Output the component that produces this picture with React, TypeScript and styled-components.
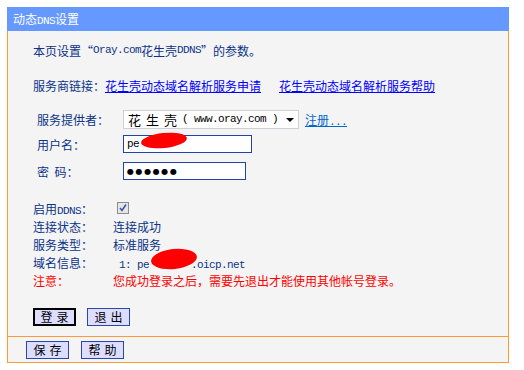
import styled, { createGlobalStyle } from "styled-components";

const GlobalStyle = createGlobalStyle`
  body {
    margin: 0;
    background: #ffffff;
    font-family: "Noto Sans CJK SC", "Liberation Sans", sans-serif;
    font-size: 12px;
  }
`;

const Page = styled.div`
  width: 502px;
  margin: 7px 0 0 7px;
`;

const Header = styled.div`
  height: 24px;
  line-height: 24px;
  padding-left: 6px;
  background: #6699ff;
  color: #ffffff;
  font-size: 12px;
`;

const Panel = styled.div`
  background: #f4f4f4;
  border: 1px solid #ff9933;
  border-top: none;
  padding: 10px 0 10px 25px;
`;

const Footer = styled.div`
  display: flex;
  gap: 12px;
  align-items: center;
  height: 25px;
  padding-left: 18px;
  background: #f4f4f4;
  border: 1px solid #ff9933;
  border-top: none;
`;

const Mono = styled.span`
  font-family: "Liberation Mono", monospace;
  font-size: 11px;
  letter-spacing: -0.6px;
`;

const Line = styled.div<{ $h: number; $mt?: number; $color?: string }>`
  display: flex;
  align-items: center;
  height: ${(p) => p.$h}px;
  margin-top: ${(p) => p.$mt ?? 0}px;
  color: ${(p) => p.$color ?? "#0b3388"};
  white-space: nowrap;
`;

const Link = styled.a<{ $light?: boolean }>`
  color: ${(p) => (p.$light ? "#0066cc" : "#0000ff")};
  text-decoration: underline;
  cursor: pointer;
`;

const Label = styled.span<{ $w: number; $color?: string }>`
  display: inline-block;
  width: ${(p) => p.$w}px;
  flex: none;
  color: ${(p) => p.$color ?? "#0b3388"};
`;

const FormBlock = styled.div`
  padding-left: 4px;
`;

const FakeSelect = styled.div`
  position: relative;
  display: flex;
  align-items: center;
  box-sizing: border-box;
  width: 176px;
  height: 19px;
  padding-left: 4px;
  background: #ffffff;
  border: 1px solid #cfcfd6;
  color: #000000;
  font-size: 13px;
`;

const Arrow = styled.span`
  position: absolute;
  right: 4px;
  top: 7px;
  width: 0;
  height: 0;
  border-left: 4px solid transparent;
  border-right: 4px solid transparent;
  border-top: 4px solid #000000;
`;

const Spaced = styled.span`
  letter-spacing: 5px;
`;

const TextBox = styled.div<{ $w: number }>`
  position: relative;
  display: flex;
  align-items: center;
  box-sizing: border-box;
  width: ${(p) => p.$w}px;
  height: 18px;
  padding-left: 3px;
  background: #ffffff;
  border: 1px solid #2244aa;
  color: #000000;
`;

const Blot = styled.span<{ $w: number; $h: number; $l: number; $t: number }>`
  position: absolute;
  left: ${(p) => p.$l}px;
  top: ${(p) => p.$t}px;
  width: ${(p) => p.$w}px;
  height: ${(p) => p.$h}px;
  background: #ff0000;
  border-radius: 50%;
  transform: rotate(-6deg);
`;

const Dots = styled.span`
  font-family: "DejaVu Sans", sans-serif;
  font-size: 8px;
  letter-spacing: 1.6px;
  color: #000000;
`;

const Check = styled.span`
  display: inline-flex;
  align-items: center;
  justify-content: center;
  box-sizing: border-box;
  width: 12px;
  height: 12px;
  margin-left: 4px;
  border: 1px solid #8d8d8d;
  background: #e6e6e6;
`;

const Value = styled.span<{ $color?: string }>`
  position: relative;
  color: ${(p) => p.$color ?? "#0b3388"};
`;

const Buttons = styled.div`
  display: flex;
  gap: 11px;
  margin-top: 19px;
`;

const Button = styled.button<{ $focused?: boolean }>`
  box-sizing: border-box;
  width: 43px;
  height: 18px;
  padding: 0;
  background: #ddddff;
  border: ${(p) => (p.$focused ? "2px solid #000000" : "1px solid #2a47a8")};
  color: #000000;
  font-family: "Noto Sans CJK SC", sans-serif;
  font-size: 12px;
  line-height: 14px;
  letter-spacing: 4px;
  text-indent: 4px;
  white-space: nowrap;
`;

export default function App() {
  return (
    <>
      <GlobalStyle />
      <Page>
        <Header>
          动态<Mono>DNS</Mono>设置
        </Header>
        <Panel>
          <Line $h={18}>
            本页设置“<Mono>Oray.com</Mono>花生壳<Mono>DDNS</Mono>”的参数。
          </Line>
          <Line $h={18} $mt={17}>
            <Label $w={72}>服务商链接：</Label>
            <Link>花生壳动态域名解析服务申请</Link>
            <span style={{ width: 18 }} />
            <Link>花生壳动态域名解析服务帮助</Link>
          </Line>
          <FormBlock>
            <Line $h={26} $mt={12}>
              <Label $w={86}>服务提供者：</Label>
              <FakeSelect>
                <Spaced>花生壳</Spaced>
                <Mono>( www.oray.com )</Mono>
                <Arrow />
              </FakeSelect>
              <Link $light style={{ marginLeft: 6 }}>
                注册<Mono>...</Mono>
              </Link>
            </Line>
            <Line $h={24}>
              <Label $w={86}>用户名：</Label>
              <TextBox $w={129}>
                <Mono>pe</Mono>
                <Blot $w={46} $h={15} $l={17} $t={-3} />
              </TextBox>
            </Line>
            <Line $h={30}>
              <Label $w={86}>密&nbsp;&nbsp;码：</Label>
              <TextBox $w={123}>
                <Dots>●●●●●●</Dots>
              </TextBox>
            </Line>
          </FormBlock>
          <Line $h={18} $mt={13}>
            <Label $w={80}>启用<Mono>DDNS</Mono>：</Label>
            <Check>
              <svg width="10" height="10" viewBox="0 0 10 10">
                <path d="M2 5 L4 7.5 L8 1.5" stroke="#3b57a8" strokeWidth="1.6" fill="none" />
              </svg>
            </Check>
          </Line>
          <Line $h={18}>
            <Label $w={80}>连接状态：</Label>
            <Value>连接成功</Value>
          </Line>
          <Line $h={18}>
            <Label $w={80}>服务类型：</Label>
            <Value>标准服务</Value>
          </Line>
          <Line $h={18}>
            <Label $w={80}>域名信息：</Label>
            <Value>
              <Mono>
                &nbsp;1:&nbsp;pe<span style={{ display: "inline-block", width: 42 }} />.oicp.net
              </Mono>
              <Blot $w={46} $h={20} $l={38} $t={-5} />
            </Value>
          </Line>
          <Line $h={18} $color="#ff0000">
            <Label $w={80} $color="#ff0000">注意：</Label>
            <Value $color="#ff0000">您成功登录之后，需要先退出才能使用其他帐号登录。</Value>
          </Line>
          <Buttons>
            <Button $focused>登录</Button>
            <Button>退出</Button>
          </Buttons>
        </Panel>
        <Footer>
          <Button>保存</Button>
          <Button>帮助</Button>
        </Footer>
      </Page>
    </>
  );
}
